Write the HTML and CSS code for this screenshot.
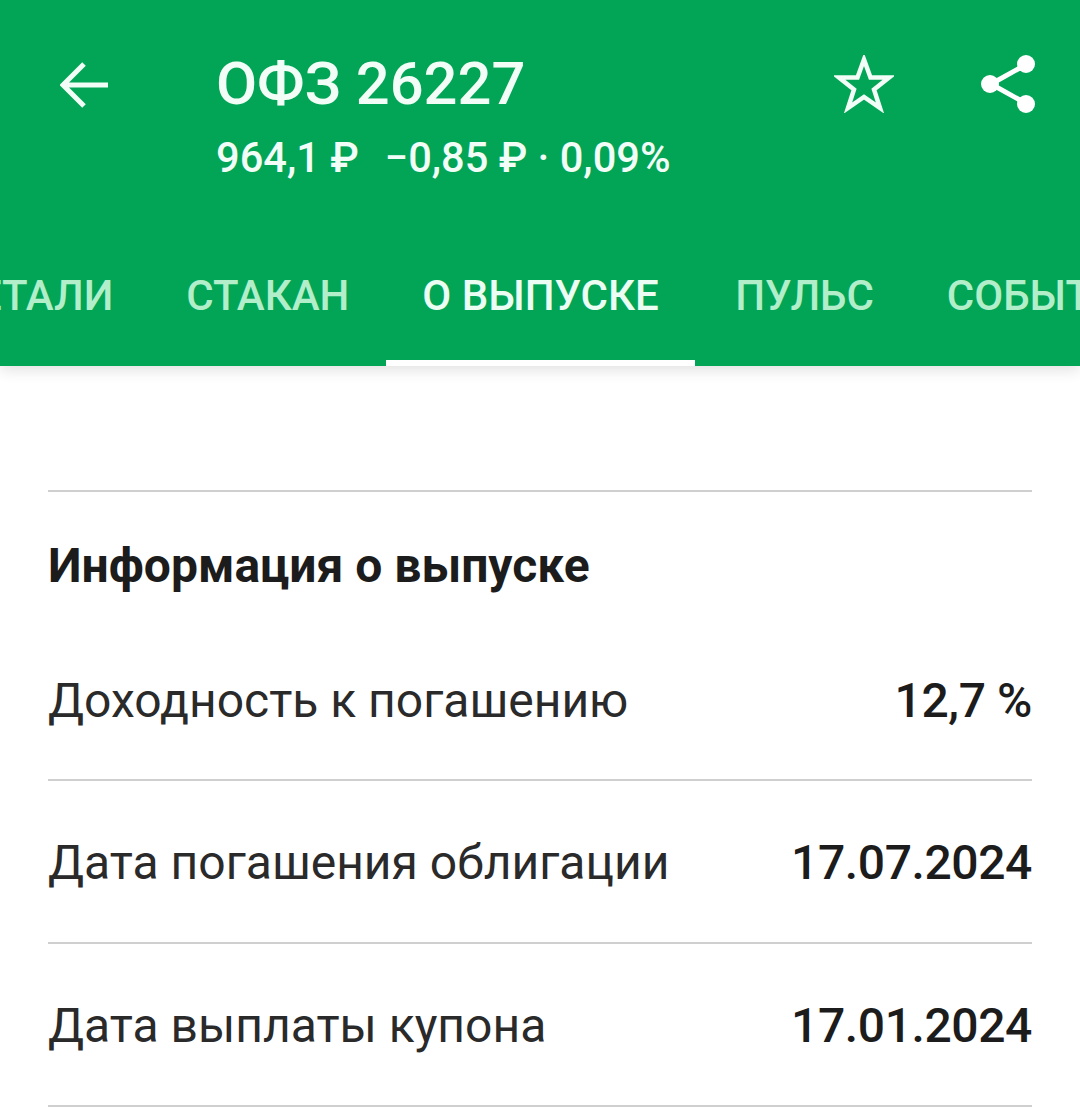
FILE: index.html
```html
<!DOCTYPE html>
<html lang="ru">
<head>
<meta charset="utf-8">
<title>ОФЗ 26227</title>
<link rel="stylesheet" href="styles.css">
</head>
<body>
<header class="appbar">
  <div class="toolbar">
    <button class="icon-btn back" aria-label="Назад">
      <svg width="48" height="48" viewBox="0 0 48 48"><path d="M48 24H5M24 3 3 24l21 21" fill="none" stroke="#f1fdf6" stroke-width="5"/></svg>
    </button>
    <div class="titles">
      <h1 class="title">ОФЗ 26227</h1>
      <p class="subtitle"><span class="price">964,1 ₽</span><span>−0,85 ₽ · 0,09%</span></p>
    </div>
    <div class="actions">
      <svg class="star" width="60" height="58" viewBox="0 0 60 58"><path d="M30 4.500 36.500 22.500H55L40 34.500 46 53 30 42 14 53 20 34.500 5 22.500H23.500Z" fill="none" stroke="#f1fdf6" stroke-width="4.500"/></svg>
      <svg class="share" width="58" height="62" viewBox="0 0 58 62"><path d="M47 11 11 31l36 20" fill="none" stroke="#fff" stroke-width="5"/><circle cx="46" cy="11" r="9" fill="#fff"/><circle cx="10" cy="31" r="9" fill="#fff"/><circle cx="46" cy="51" r="9" fill="#fff"/></svg>
    </div>
  </div>
  <nav class="tabs">
    <a class="tab first">ДЕТАЛИ</a>
    <a class="tab">СТАКАН</a>
    <a class="tab active">О ВЫПУСКЕ</a>
    <a class="tab">ПУЛЬС</a>
    <a class="tab">СОБЫТИЯ</a>
  </nav>
</header>
<main class="content">
  <section class="info">
    <h2 class="heading">Информация о выпуске</h2>
    <div class="row first-row"><span>Доходность к погашению</span><b>12,7 %</b></div>
    <div class="row"><span>Дата погашения облигации</span><b>17.07.2024</b></div>
    <div class="row"><span>Дата выплаты купона</span><b>17.01.2024</b></div>
  </section>
</main>
</body>
</html>
```
FILE: styles.css
```css
* { box-sizing: border-box; }
html, body { margin: 0; padding: 0; }
body {
  width: 1080px;
  height: 1109px;
  overflow: hidden;
  background: #fff;
  font-family: Roboto, "Liberation Sans", sans-serif;
  color: #1c1c1c;
}
.appbar {
  height: 366px;
  background: #02a556;
  box-shadow: 0 4px 14px rgba(0, 0, 0, .12);
  position: relative;
  color: #f1fdf6;
}
.toolbar {
  display: flex;
  height: 245px;
  padding: 50px 42px 0 60px;
  align-items: flex-start;
}
.icon-btn {
  padding: 0;
  border: 0;
  background: none;
  width: 156px;
  height: 70px;
  text-align: left;
}
.back svg { display: block; }
.titles { flex: 1; }
.title {
  margin: 0;
  font-size: 59.700px;
  line-height: 68px;
  font-weight: 500;
}
.subtitle {
  margin: 16px 0 0;
  font-size: 41.600px;
  line-height: 47px;
  font-weight: 500;
  display: flex;
  gap: 26px;
}
.actions { display: flex; gap: 86px; align-items: flex-start; }
.star { margin-top: 5px; }
.share { margin-top: 3px; }
.tabs {
  display: flex;
  height: 121px;
  margin-left: -90px;
  width: 1170px;
  overflow: hidden;
  font-size: 42px;
  font-weight: 500;
  color: #b1eec9;
}
.tab {
  padding: 26px 36.500px 0;
  line-height: 50px;
  white-space: nowrap;
  border-bottom: 6px solid transparent;
}
.tab.active {
  color: #ecfdf3;
  border-bottom-color: #fff;
  margin-right: 3.500px;
}
.content { padding: 124px 48px 0; }
.info { border-top: 2px solid #cfcfcf; }
.heading {
  margin: 0;
  padding-top: 48px;
  font-size: 48px;
  line-height: 52px;
  font-weight: 700;
  color: #1c1c1c;
}
.row {
  height: 163px;
  padding-top: 3px;
  display: flex;
  justify-content: space-between;
  align-items: center;
  border-bottom: 2px solid #cfcfcf;
  font-size: 48px;
  line-height: 56px;
  color: #2a2a2a;
}
.row b { font-weight: 500; color: #1c1c1c; letter-spacing: -.4px; }
.first-row { height: 189px; align-items: flex-end; padding-bottom: 50px; }
```
